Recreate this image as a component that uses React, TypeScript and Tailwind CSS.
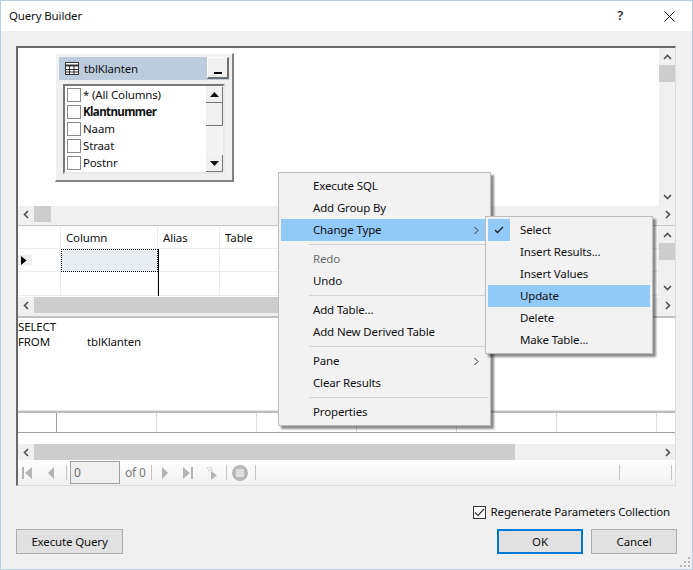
import { ReactNode } from "react";

const font = "font-['Noto_Sans','Open_Sans',sans-serif] tracking-[-0.15px]";

function Chevron({ dir, className = "" }: { dir: "left" | "right" | "up" | "down"; className?: string }) {
  const d = {
    left: "M6 1 L2.5 4.5 L6 8",
    right: "M3 1 L6.5 4.5 L3 8",
    up: "M1 6 L4.5 2.5 L8 6",
    down: "M1 3 L4.5 6.5 L8 3",
  }[dir];
  return (
    <svg width="9" height="9" viewBox="0 0 9 9" className={className}>
      <path d={d} fill="none" stroke="#505050" strokeWidth="1.6" />
    </svg>
  );
}

function Tri({ dir }: { dir: "up" | "down" }) {
  return (
    <svg width="9" height="5" viewBox="0 0 9 5">
      <path d={dir === "up" ? "M4.5 0 L9 5 L0 5 Z" : "M0 0 L9 0 L4.5 5 Z"} fill="#111" />
    </svg>
  );
}

function HScroll({ thumbClass }: { thumbClass: string }) {
  return (
    <div className="h-[16px] bg-[#f0f0f0] flex items-center shrink-0">
      <div className="w-[16px] flex justify-center shrink-0">
        <Chevron dir="left" />
      </div>
      <div className="flex-1 h-full flex">
        <div className={"h-full bg-[#cdcdcd] " + thumbClass} />
      </div>
      <div className="w-[16px] flex justify-center shrink-0">
        <Chevron dir="right" />
      </div>
    </div>
  );
}

function VScroll({ thumbClass }: { thumbClass: string }) {
  return (
    <div className="w-[16px] shrink-0 bg-[#f0f0f0] flex flex-col items-center pt-[5px] pb-[5px]">
      <Chevron dir="up" />
      <div className={"w-full bg-[#cdcdcd] " + thumbClass} />
      <div className="flex-1" />
      <Chevron dir="down" />
    </div>
  );
}

function TableWindow() {
  const rows = ["* (All Columns)", "Klantnummer", "Naam", "Straat", "Postnr"];
  return (
    <div className="absolute left-[37px] top-[5px] w-[179px] h-[129px] bg-[#f0f0f0] border-t border-l border-white border-r-2 border-b-2 border-r-[#808080] border-b-[#808080] p-[3px] pb-0">
      <div className="h-[23px] bg-[#bdccdc] flex items-center pl-[6px] relative">
        <svg width="14" height="13" viewBox="0 0 14 13" className="mr-[5px]">
          <rect x="0.5" y="0.5" width="13" height="12" fill="#fff" stroke="#333" />
          <path d="M0 3.5H14" stroke="#333" strokeWidth="2" />
          <path d="M0 7.5H14M0 10H14M4.5 3V13M9 3V13" stroke="#333" />
        </svg>
        <span className="text-[11.5px] text-[#111]">tblKlanten</span>
        <div className="absolute right-0 top-0 w-[22px] h-[22px] bg-[#f0f0f0] border-r-2 border-b-2 border-[#707070] border-t border-l border-t-white border-l-white flex items-end justify-center pb-[3px]">
          <div className="w-[8px] h-[2px] bg-black" />
        </div>
      </div>
      <div className="mt-[4px] mx-[4px] h-[90px] bg-white border-2 border-t-[#777] border-l-[#777] border-r-[#e8e8e8] border-b-[#e8e8e8] flex overflow-hidden">
        <div className="flex-1 pl-[2px]">
          {rows.map((r) => (
            <div key={r} className="h-[17px] flex items-center">
              <div className="w-[14px] h-[14px] bg-white border border-[#8a8a8a] mr-[2px] shrink-0" />
              <span className={"text-[11.5px] leading-none whitespace-nowrap " + (r === "Klantnummer" ? "font-bold tracking-[-0.6px] text-[#111]" : "text-[#111]")}>{r}</span>
            </div>
          ))}
          <div className="w-[14px] h-[14px] bg-white border border-[#8a8a8a] mt-[2px]" />
        </div>
        <div className="w-[17px] shrink-0 bg-[#f2f2f2] flex flex-col pt-[1px]">
          <div className="h-[16px] bg-[#f0f0f0] border-r border-b border-[#777] flex items-center justify-center">
            <Tri dir="up" />
          </div>
          <div className="h-[23px] bg-[#f0f0f0] border-r border-b border-[#777]" />
          <div className="flex-1" />
          <div className="h-[17px] bg-[#f0f0f0] border-r border-b border-[#777] flex items-center justify-center">
            <Tri dir="down" />
          </div>
        </div>
      </div>
    </div>
  );
}

function GridPane() {
  const line = "border-r border-b border-[#ededed]";
  return (
    <div className="h-[71px] shrink-0 flex">
      <div className="flex-1 bg-white grid grid-cols-[43px_97px_62px_1fr] grid-rows-[23px_23px_24px] text-[11.5px] text-[#111] relative">
        <div className={line} />
        <div className={line + " pl-[5px] pt-[2px] flex items-center"}>Column</div>
        <div className={line + " pl-[5px] pt-[2px] flex items-center"}>Alias</div>
        <div className={line + " pl-[5px] pt-[2px] flex items-center"}>Table</div>
        <div className={line + " flex items-center"}>
          <div className="w-[14px] h-[10px] bg-[#f0f0f0] flex items-center pl-[3px]">
            <svg width="6" height="9" viewBox="0 0 6 9">
              <path d="M0 0 L5.5 4.5 L0 9 Z" fill="#000" />
            </svg>
          </div>
        </div>
        <div className="bg-[#e8edf2] border border-dotted border-black" />
        <div className={line} />
        <div className={line} />
        <div className={line} />
        <div className={line} />
        <div className={line} />
        <div className={line} />
        <div className="absolute left-[140px] top-[23px] w-[1px] h-[47px] bg-black" />
      </div>
      <VScroll thumbClass="h-[17px] mt-[3px]" />
    </div>
  );
}

function ResultsGrid() {
  const cols = [39, 100, 100, 100, 100, 100, 100];
  return (
    <div className="h-[20px] shrink-0 bg-white border-b border-[#a0a0a0] flex">
      {cols.map((w, i) => (
        <div key={i} style={{ width: w }} className={"h-full border-r shrink-0 " + (i === 0 ? "border-[#a0a0a0]" : "border-[#dcdcdc]")} />
      ))}
    </div>
  );
}

function Sep() {
  return <div className="w-[1px] h-[15px] bg-[#c4c4c4] shrink-0" />;
}

function NavIcon({ children, className = "" }: { children: ReactNode; className?: string }) {
  return (
    <svg width="12" height="14" viewBox="0 0 12 14" className={"shrink-0 " + className}>
      {children}
    </svg>
  );
}

function NavBar() {
  const g = "#b4b4b4";
  return (
    <div className="h-[25px] shrink-0 bg-gradient-to-b from-white to-[#f0f0f0] flex items-center text-[12px] text-[#777]">
      <NavIcon className="ml-[4px]">
        <path d="M0 1H2V13H0Z M10 1V13L3 7Z" fill={g} />
      </NavIcon>
      <NavIcon className="ml-[11px]">
        <path d="M9 1V13L3 7Z" fill={g} />
      </NavIcon>
      <div className="ml-[9px] mr-[3px]">
        <Sep />
      </div>
      <div className="w-[50px] h-[23px] border border-[#a0a0a0] bg-[#f0f0f0] pl-[3px] flex items-center text-[#6d6d6d]">0</div>
      <span className="ml-[5px] w-[26px] whitespace-nowrap">of 0</span>
      <Sep />
      <NavIcon className="ml-[7px]">
        <path d="M3 1V13L9 7Z" fill={g} />
      </NavIcon>
      <NavIcon className="ml-[11px]">
        <path d="M1 1V13L8 7Z M9 1H11V13H9Z" fill={g} />
      </NavIcon>
      <NavIcon className="ml-[12px]">
        <path d="M5 5V14L11 9.5Z" fill={g} />
        <path d="M1 1H2.5V2.5H1Z M4 1H5.5V2.5H4Z M2.5 3.5H4V5H2.5Z M5.5 3.5H7V5H5.5Z" fill="#c8c8c8" />
      </NavIcon>
      <div className="ml-[8px] mr-[5px]">
        <Sep />
      </div>
      <div className="w-[16px] h-[16px] rounded-full bg-[#b8b8b8] flex items-center justify-center shrink-0">
        <div className="w-[8px] h-[8px] rounded-[1px] bg-[#dedede]" />
      </div>
      <div className="ml-[7px]">
        <Sep />
      </div>
      <div className="flex-1" />
      <Sep />
      <div className="w-[51px]" />
      <Sep />
      <div className="w-[3px]" />
    </div>
  );
}

type MenuItem = { label?: string; sub?: boolean; active?: boolean; disabled?: boolean; sep?: boolean; check?: boolean };

function Menu({ items, className }: { items: MenuItem[]; className: string }) {
  return (
    <div className={"absolute bg-[#f2f2f2] border border-[#bdbdbd] shadow-[3px_3px_2px_rgba(0,0,0,0.45)] py-[2px] px-[2px] text-[11.5px] text-[#111] " + className}>
      {items.map((it, i) =>
        it.sep ? (
          <div key={i} className="h-[7px] flex items-center pl-[28px]">
            <div className="h-[1px] w-full bg-[#d2d2d2]" />
          </div>
        ) : (
          <div key={i} className={"h-[22px] flex items-center relative " + (it.active ? "bg-[#91c9f7]" : "")}>
            {it.check && (
              <div className="absolute left-0 top-0 w-[22px] h-[22px] bg-[#91c9f7] flex items-center justify-center">
                <svg width="10" height="8" viewBox="0 0 10 8">
                  <path d="M1 4 L3.5 6.5 L9 1" fill="none" stroke="#222" strokeWidth="1.3" />
                </svg>
              </div>
            )}
            <span className={"pl-[32px] whitespace-nowrap " + (it.disabled ? "text-[#6d6d6d]" : "")}>{it.label}</span>
            {it.sub && (
              <svg width="5" height="9" viewBox="0 0 5 9" className="absolute right-[9px] top-[7px]">
                <path d="M0.5 1 L4 4.5 L0.5 8" fill="none" stroke="#333" />
              </svg>
            )}
          </div>
        ),
      )}
    </div>
  );
}

export default function App() {
  const mainItems: MenuItem[] = [
    { label: "Execute SQL" },
    { label: "Add Group By" },
    { label: "Change Type", sub: true, active: true },
    { sep: true },
    { label: "Redo", disabled: true },
    { label: "Undo" },
    { sep: true },
    { label: "Add Table..." },
    { label: "Add New Derived Table" },
    { sep: true },
    { label: "Pane", sub: true },
    { label: "Clear Results" },
    { sep: true },
    { label: "Properties" },
  ];
  const subItems: MenuItem[] = [
    { label: "Select", check: true },
    { label: "Insert Results..." },
    { label: "Insert Values" },
    { label: "Update", active: true },
    { label: "Delete" },
    { label: "Make Table..." },
  ];

  return (
    <div className={"relative w-[693px] h-[570px] overflow-hidden bg-[#f0f0f0] border border-[#b5cfe6] flex flex-col " + font}>
      <div className="h-[30px] shrink-0 bg-white flex items-center pl-[8px] text-[11.5px] text-[#111]">
        <span>Query Builder</span>
        <div className="flex-1" />
        <span className="mr-[41px] text-[13px] font-semibold text-[#333]">?</span>
        <svg width="11" height="11" viewBox="0 0 11 11" className="mr-[17px]">
          <path d="M0.5 0.5 L10.5 10.5 M10.5 0.5 L0.5 10.5" stroke="#111" />
        </svg>
      </div>

      <div className="ml-[15px] mt-[15px] w-[660px] h-[440px] shrink-0 flex flex-col border-t-2 border-l-2 border-t-[#696969] border-l-[#696969] border-r border-b border-r-[#dcdcdc] border-b-[#dcdcdc]">
        <div className="h-[158px] shrink-0 flex relative">
          <div className="flex-1 bg-white" />
          <VScroll thumbClass="h-[17px] mt-[3px]" />
          <TableWindow />
        </div>
        <HScroll thumbClass="w-[17px]" />
        <div className="h-[4px] shrink-0 bg-[#f0f0f0] border-b border-[#c8c8c8]" />
        <GridPane />
        <HScroll thumbClass="w-[570px]" />
        <div className="h-[5px] shrink-0 bg-[#f0f0f0] border-b-2 border-[#c0c0c0]" />
        <div className="h-[92px] shrink-0 bg-white text-[11.5px] leading-[15px] text-[#111] pt-[1px]">
          <div>SELECT</div>
          <div className="flex">
            <span className="w-[69px]">FROM</span>
            <span>tblKlanten</span>
          </div>
        </div>
        <div className="h-[3px] shrink-0 bg-[#bdbdbd] border-t border-[#e4e4e4]" />
        <ResultsGrid />
        <div className="h-[11px] shrink-0 bg-white" />
        <HScroll thumbClass="w-[481px]" />
        <NavBar />
      </div>

      <div className="flex-1 flex flex-col px-[15px]">
        <div className="mt-[16px] h-[20px] flex items-center justify-end pr-[7px] text-[11.5px] text-[#111]">
          <div className="w-[13px] h-[13px] bg-white border border-[#333] mr-[5px] flex items-center justify-center">
            <svg width="11" height="9" viewBox="0 0 11 9">
              <path d="M1 4.5 L4 7.5 L10 1" fill="none" stroke="#333" strokeWidth="1.2" />
            </svg>
          </div>
          <span>Regenerate Parameters Collection</span>
        </div>
        <div className="mt-[7px] flex items-start text-[11.5px] text-[#111]">
          <div className="w-[107px] h-[25px] bg-[#e1e1e1] border border-[#adadad] flex items-center justify-center">Execute Query</div>
          <div className="flex-1" />
          <div className="w-[86px] h-[25px] bg-[#e1e1e1] border-2 border-[#0078d7] flex items-center justify-center">OK</div>
          <div className="ml-[8px] w-[86px] h-[25px] bg-[#e1e1e1] border border-[#adadad] flex items-center justify-center">Cancel</div>
        </div>
      </div>

      <svg width="11" height="11" viewBox="0 0 11 11" className="absolute right-[1px] bottom-[1px]">
        <path d="M8 0H10V2H8Z M4 4H6V6H4Z M8 4H10V6H8Z M0 8H2V10H0Z M4 8H6V10H4Z M8 8H10V10H8Z" fill="#b8b8b8" />
      </svg>

      <Menu items={mainItems} className="left-[277px] top-[171px] w-[213px]" />
      <Menu items={subItems} className="left-[484px] top-[215px] w-[168px]" />
    </div>
  );
}
